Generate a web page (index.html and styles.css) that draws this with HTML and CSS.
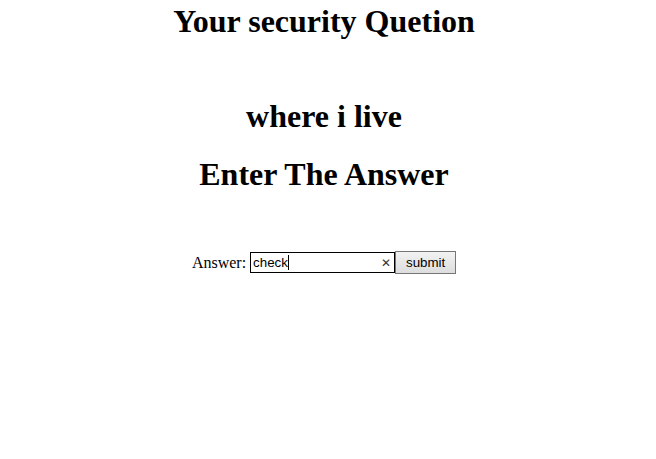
FILE: index.html
```html
<!DOCTYPE html>
<html>
<head>
<meta charset="utf-8">
<link rel="stylesheet" href="styles.css">
</head>
<body>
<div class="page">
  <h1 class="title">Your security Quetion</h1>
  <h1 class="question">where i live</h1>
  <h1 class="prompt">Enter The Answer</h1>
  <form class="answer-form">
    <label class="answer-label" for="answer">Answer:</label>
    <span class="field">
      <span class="field-text">check</span><span class="caret"></span>
      <span class="clear">&#x2715;</span>
    </span><button type="button" class="submit">submit</button>
  </form>
</div>
</body>
</html>
```

FILE: styles.css
```css
html, body {
  margin: 0;
  padding: 0;
  background: #ffffff;
}
.page {
  width: 648px;
  text-align: center;
  font-family: "Liberation Serif", "Times New Roman", serif;
  color: #000;
}
h1 {
  font-size: 32px;
  font-weight: bold;
  margin: 0;
  line-height: 37px;
}
.title {
  padding-top: 3px;
}
.question {
  margin-top: 58px;
}
.prompt {
  margin-top: 21px;
}
.answer-form {
  margin-top: 58px;
  font-size: 16px;
  display: flex;
  justify-content: center;
  align-items: center;
}
.answer-label {
  margin-right: 4px;
}
.field {
  display: inline-flex;
  align-items: center;
  box-sizing: border-box;
  width: 145px;
  height: 21px;
  border: 1px solid #000;
  padding: 0 2px;
  font-family: "Liberation Sans", Arial, sans-serif;
  font-size: 13.33px;
  text-align: left;
}
.field-text {
  line-height: 15px;
}
.caret {
  display: inline-block;
  width: 1px;
  height: 15px;
  background: #000;
}
.clear {
  margin-left: auto;
  font-size: 12px;
  color: #333;
  padding-right: 1px;
}
.submit {
  box-sizing: border-box;
  width: 61px;
  height: 23px;
  margin: 0;
  padding: 0;
  border: 1px solid #767676;
  border-radius: 0;
  background: linear-gradient(#f2f2f2, #dddddd);
  font-family: "Liberation Sans", Arial, sans-serif;
  font-size: 13.33px;
  color: #000;
}
```
